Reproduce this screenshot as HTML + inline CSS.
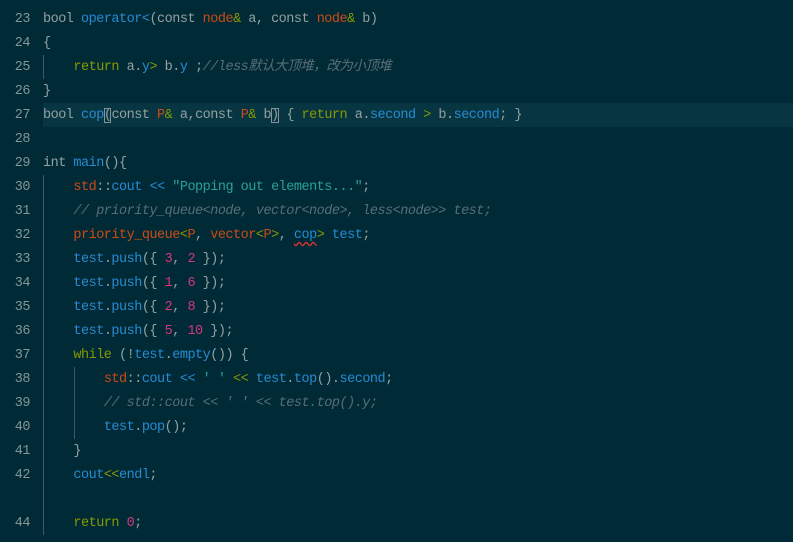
<!DOCTYPE html>
<html><head><meta charset="utf-8"><style>
html,body{margin:0;padding:0;background:#002b36;width:793px;height:542px;overflow:hidden}
body{font-family:"Liberation Mono","Noto Sans CJK SC",monospace;font-size:13.5px;letter-spacing:-0.5px;color:#93a1a1;position:relative}
.l{position:absolute;left:0;height:24px;line-height:24px;width:793px;white-space:pre;margin-top:1px}
.n{position:absolute;left:0;width:30px;text-align:right;color:#839496}
.c{position:absolute;left:43px}
.hl{background:#073642}
.b{color:#268bd2}.r{color:#cb4b16}.g{color:#859900}.m{color:#d33682}.cy{color:#2aa198}
.cm{color:#586e75;font-style:italic}
.gd{position:absolute;width:1px;background:#3d5a62}
.box{outline:1px solid #839496;outline-offset:-1px}
.sq{text-decoration:underline wavy #dc322f;text-underline-offset:3px}
</style></head><body>
<div class="l hl" style="top:103px;left:43px;width:750px;margin-top:0"></div>
<div class="gd" style="left:43px;top:55px;height:24px"></div>
<div class="gd" style="left:43px;top:175px;height:360px"></div>
<div class="gd" style="left:74px;top:367px;height:72px"></div>

<div class="l" style="top:7px"><span class="n">23</span><span class="c">bool <span class="b">operator&lt;</span>(const <span class="r">node</span><span class="g">&amp;</span> a, const <span class="r">node</span><span class="g">&amp;</span> b)</span></div>
<div class="l" style="top:31px"><span class="n">24</span><span class="c">{</span></div>
<div class="l" style="top:55px"><span class="n">25</span><span class="c">    <span class="g">return</span> a.<span class="b">y</span><span class="g">&gt;</span> b.<span class="b">y</span> ;<span class="cm">//less默认大顶堆，改为小顶堆</span></span></div>
<div class="l" style="top:79px"><span class="n">26</span><span class="c">}</span></div>
<div class="l" style="top:103px"><span class="n">27</span><span class="c">bool <span class="b">cop</span><span class="box">(</span>const <span class="r">P</span><span class="g">&amp;</span> a,const <span class="r">P</span><span class="g">&amp;</span> b<span class="box">)</span> { <span class="g">return</span> a.<span class="b">second</span> <span class="g">&gt;</span> b.<span class="b">second</span>; }</span></div>
<div class="l" style="top:127px"><span class="n">28</span></div>
<div class="l" style="top:151px"><span class="n">29</span><span class="c">int <span class="b">main</span>(){</span></div>
<div class="l" style="top:175px"><span class="n">30</span><span class="c">    <span class="r">std</span>::<span class="b">cout</span> <span class="b">&lt;&lt;</span> <span class="cy">"Popping out elements..."</span>;</span></div>
<div class="l" style="top:199px"><span class="n">31</span><span class="c">    <span class="cm">// priority_queue&lt;node, vector&lt;node&gt;, less&lt;node&gt;&gt; test;</span></span></div>
<div class="l" style="top:223px"><span class="n">32</span><span class="c">    <span class="r">priority_queue</span><span class="g">&lt;</span><span class="r">P</span>, <span class="r">vector</span><span class="g">&lt;</span><span class="r">P</span><span class="g">&gt;</span>, <span class="b sq">cop</span><span class="g">&gt;</span> <span class="b">test</span>;</span></div>
<div class="l" style="top:247px"><span class="n">33</span><span class="c">    <span class="b">test</span>.<span class="b">push</span>({ <span class="m">3</span>, <span class="m">2</span> });</span></div>
<div class="l" style="top:271px"><span class="n">34</span><span class="c">    <span class="b">test</span>.<span class="b">push</span>({ <span class="m">1</span>, <span class="m">6</span> });</span></div>
<div class="l" style="top:295px"><span class="n">35</span><span class="c">    <span class="b">test</span>.<span class="b">push</span>({ <span class="m">2</span>, <span class="m">8</span> });</span></div>
<div class="l" style="top:319px"><span class="n">36</span><span class="c">    <span class="b">test</span>.<span class="b">push</span>({ <span class="m">5</span>, <span class="m">10</span> });</span></div>
<div class="l" style="top:343px"><span class="n">37</span><span class="c">    <span class="g">while</span> (!<span class="b">test</span>.<span class="b">empty</span>()) {</span></div>
<div class="l" style="top:367px"><span class="n">38</span><span class="c">        <span class="r">std</span>::<span class="b">cout</span> <span class="b">&lt;&lt;</span> <span class="cy">' '</span> <span class="g">&lt;&lt;</span> <span class="b">test</span>.<span class="b">top</span>().<span class="b">second</span>;</span></div>
<div class="l" style="top:391px"><span class="n">39</span><span class="c">        <span class="cm">// std::cout &lt;&lt; ' ' &lt;&lt; test.top().y;</span></span></div>
<div class="l" style="top:415px"><span class="n">40</span><span class="c">        <span class="b">test</span>.<span class="b">pop</span>();</span></div>
<div class="l" style="top:439px"><span class="n">41</span><span class="c">    }</span></div>
<div class="l" style="top:463px"><span class="n">42</span><span class="c">    <span class="b">cout</span><span class="g">&lt;&lt;</span><span class="b">endl</span>;</span></div>
<div class="l" style="top:511px"><span class="n">44</span><span class="c">    <span class="g">return</span> <span class="m">0</span>;</span></div>
</body></html>
